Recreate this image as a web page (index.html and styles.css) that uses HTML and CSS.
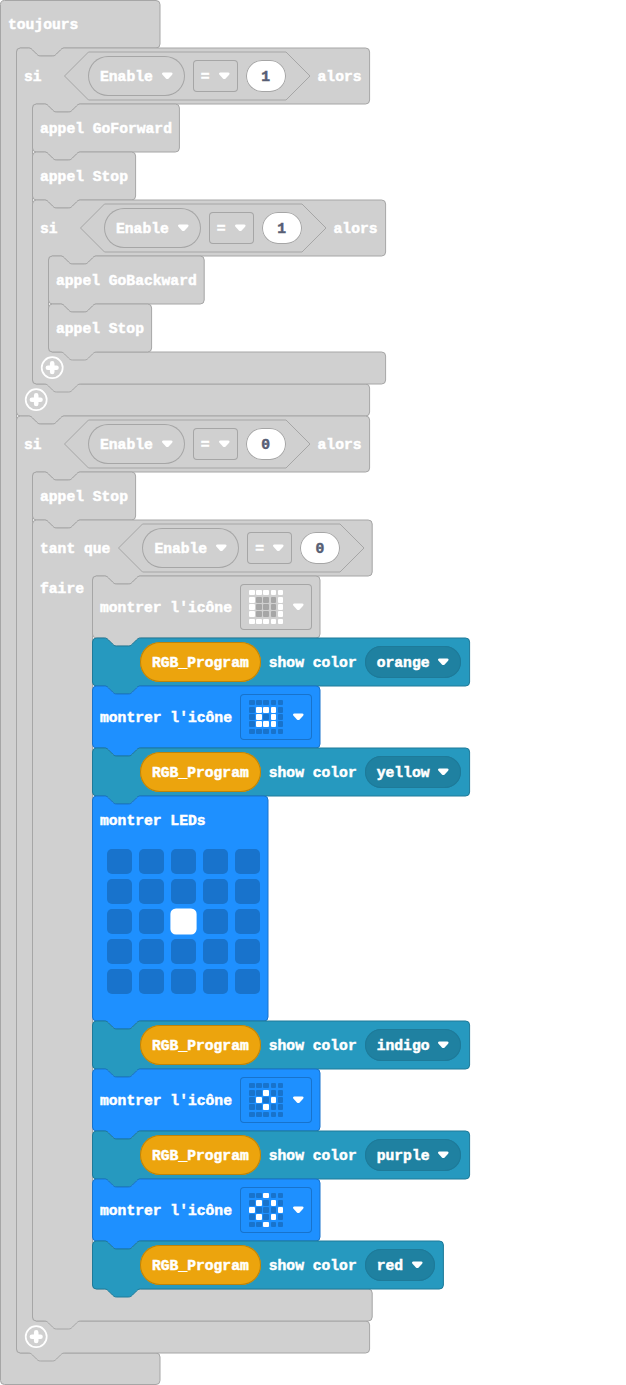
FILE: index.html
```html
<!DOCTYPE html>
<html lang="fr">
<head>
<meta charset="utf-8">
<title>toujours</title>
<link rel="stylesheet" href="styles.css">
</head>
<body>
<svg class="defs" width="0" height="0">
  <symbol id="arrow" viewBox="0 0 12 8"><path d="M2.4 .5H10.2C11.7 .5 11.9 1.9 11.1 2.8L7.7 6.4q-1.4 1.3-2.8 0L1.5 2.8C.7 1.9 .9 .5 2.4 .5z"/></symbol>
  <symbol id="plus" viewBox="0 0 24 24"><circle cx="12.2" cy="11.7" r="10.5" fill="none" stroke="#fff" stroke-width="1.7"/><path d="M12.2 7.4v8.6M7.9 11.7h8.6" fill="none" stroke="#fff" stroke-width="4.6" stroke-linecap="round"/></symbol>
  <symbol id="hexagon" viewBox="0 0 246 48" overflow="visible"><path d="M24.5 0H222L246 24L222 48H24.5L.5 24Z"/></symbol>
  <symbol id="call" overflow="visible"><path d="M.5 4a4 4 0 0 1 4-4h8c2 0 3 1 4 2l4 4c1 1 2 2 4 2h12c2 0 3-1 4-2l4-4c1-1 2-2 4-2H99.6a4 4 0 0 1 4 4V44a4 4 0 0 1-4 4H48.5c-2 0-3 1-4 2l-4 4c-1 1-2 2-4 2h-12c-2 0-3-1-4-2l-4-4c-1-1-2-2-4-2h-8a4 4 0 0 1-4-4z"/></symbol>
  <symbol id="icon-block" overflow="visible"><path d="M.5 4a4 4 0 0 1 4-4h8c2 0 3 1 4 2l4 4c1 1 2 2 4 2h12c2 0 3-1 4-2l4-4c1-1 2-2 4-2H224a4 4 0 0 1 4 4V58a4 4 0 0 1-4 4H48.5c-2 0-3 1-4 2l-4 4c-1 1-2 2-4 2h-12c-2 0-3-1-4-2l-4-4c-1-1-2-2-4-2h-8a4 4 0 0 1-4-4z"/></symbol>
  <symbol id="color-block" overflow="visible"><path d="M.5 4a4 4 0 0 1 4-4h8c2 0 3 1 4 2l4 4c1 1 2 2 4 2h12c2 0 3-1 4-2l4-4c1-1 2-2 4-2H373.6a4 4 0 0 1 4 4V44a4 4 0 0 1-4 4H48.5c-2 0-3 1-4 2l-4 4c-1 1-2 2-4 2h-12c-2 0-3-1-4-2l-4-4c-1-1-2-2-4-2h-8a4 4 0 0 1-4-4z"/></symbol>
</svg>

<main class="block gray forever">
  <svg class="shape"><path d="M.5 4.5a4 4 0 0 1 4-4H156a4 4 0 0 1 4 4V44a4 4 0 0 1-4 4H64.5c-2 0-3 1-4 2l-4 4c-1 1-2 2-4 2h-12c-2 0-3-1-4-2l-4-4c-1-1-2-2-4-2h-8a4 4 0 0 0-4 4V1349a4 4 0 0 0 4 4H156a4 4 0 0 1 4 4V1380.5a4 4 0 0 1-4 4H4.5a4 4 0 0 1-4-4z"/></svg>
  <div class="content">
    <div class="row head"><span>toujours</span></div>
    <div class="stack">

      <section class="block gray">
        <svg class="shape"><path d="M.5 4a4 4 0 0 1 4-4h8c2 0 3 1 4 2l4 4c1 1 2 2 4 2h12c2 0 3-1 4-2l4-4c1-1 2-2 4-2H349.6a4 4 0 0 1 4 4V52a4 4 0 0 1-4 4H64.5c-2 0-3 1-4 2l-4 4c-1 1-2 2-4 2h-12c-2 0-3-1-4-2l-4-4c-1-1-2-2-4-2h-8a4 4 0 0 0-4 4V332a4 4 0 0 0 4 4H349.6a4 4 0 0 1 4 4V364a4 4 0 0 1-4 4H48.5c-2 0-3 1-4 2l-4 4c-1 1-2 2-4 2h-12c-2 0-3-1-4-2l-4-4c-1-1-2-2-4-2h-8a4 4 0 0 1-4-4z"/></svg>
        <div class="content">
          <div class="row cond">
            <span class="if">si</span>
            <div class="test"><svg class="shape"><use href="#hexagon" width="246" height="48"/></svg><div class="operands"><span class="pill var">Enable<svg class="arrow"><use href="#arrow"/></svg></span><span class="op">=<svg class="arrow"><use href="#arrow"/></svg></span><span class="num">1</span></div></div>
            <span>alors</span>
          </div>
          <div class="stack">
            <div class="block gray"><svg class="shape"><path d="M.5 4a4 4 0 0 1 4-4h8c2 0 3 1 4 2l4 4c1 1 2 2 4 2h12c2 0 3-1 4-2l4-4c1-1 2-2 4-2H143.4a4 4 0 0 1 4 4V44a4 4 0 0 1-4 4H48.5c-2 0-3 1-4 2l-4 4c-1 1-2 2-4 2h-12c-2 0-3-1-4-2l-4-4c-1-1-2-2-4-2h-8a4 4 0 0 1-4-4z"/></svg><div class="row">appel GoForward</div></div>
            <div class="block gray"><svg class="shape"><use href="#call"/></svg><div class="row">appel Stop</div></div>

            <section class="block gray">
              <svg class="shape"><path d="M.5 4a4 4 0 0 1 4-4h8c2 0 3 1 4 2l4 4c1 1 2 2 4 2h12c2 0 3-1 4-2l4-4c1-1 2-2 4-2H349.6a4 4 0 0 1 4 4V52a4 4 0 0 1-4 4H64.5c-2 0-3 1-4 2l-4 4c-1 1-2 2-4 2h-12c-2 0-3-1-4-2l-4-4c-1-1-2-2-4-2h-8a4 4 0 0 0-4 4V148a4 4 0 0 0 4 4H349.6a4 4 0 0 1 4 4V180a4 4 0 0 1-4 4H48.5c-2 0-3 1-4 2l-4 4c-1 1-2 2-4 2h-12c-2 0-3-1-4-2l-4-4c-1-1-2-2-4-2h-8a4 4 0 0 1-4-4z"/></svg>
              <div class="content">
                <div class="row cond">
                  <span class="if">si</span>
                  <div class="test"><svg class="shape"><use href="#hexagon" width="246" height="48"/></svg><div class="operands"><span class="pill var">Enable<svg class="arrow"><use href="#arrow"/></svg></span><span class="op">=<svg class="arrow"><use href="#arrow"/></svg></span><span class="num">1</span></div></div>
                  <span>alors</span>
                </div>
                <div class="stack">
                  <div class="block gray"><svg class="shape"><path d="M.5 4a4 4 0 0 1 4-4h8c2 0 3 1 4 2l4 4c1 1 2 2 4 2h12c2 0 3-1 4-2l4-4c1-1 2-2 4-2H152.2a4 4 0 0 1 4 4V44a4 4 0 0 1-4 4H48.5c-2 0-3 1-4 2l-4 4c-1 1-2 2-4 2h-12c-2 0-3-1-4-2l-4-4c-1-1-2-2-4-2h-8a4 4 0 0 1-4-4z"/></svg><div class="row">appel GoBackward</div></div>
                  <div class="block gray"><svg class="shape"><use href="#call"/></svg><div class="row">appel Stop</div></div>
                </div>
                <div class="foot"><svg class="plus"><use href="#plus"/></svg></div>
              </div>
            </section>
          </div>
          <div class="foot"><svg class="plus"><use href="#plus"/></svg></div>
        </div>
      </section>

      <section class="block gray">
        <svg class="shape"><path d="M.5 4a4 4 0 0 1 4-4h8c2 0 3 1 4 2l4 4c1 1 2 2 4 2h12c2 0 3-1 4-2l4-4c1-1 2-2 4-2H349.6a4 4 0 0 1 4 4V52a4 4 0 0 1-4 4H64.5c-2 0-3 1-4 2l-4 4c-1 1-2 2-4 2h-12c-2 0-3-1-4-2l-4-4c-1-1-2-2-4-2h-8a4 4 0 0 0-4 4V901a4 4 0 0 0 4 4H349.6a4 4 0 0 1 4 4V933a4 4 0 0 1-4 4H48.5c-2 0-3 1-4 2l-4 4c-1 1-2 2-4 2h-12c-2 0-3-1-4-2l-4-4c-1-1-2-2-4-2h-8a4 4 0 0 1-4-4z"/></svg>
        <div class="content">
          <div class="row cond">
            <span class="if">si</span>
            <div class="test"><svg class="shape"><use href="#hexagon" width="246" height="48"/></svg><div class="operands"><span class="pill var">Enable<svg class="arrow"><use href="#arrow"/></svg></span><span class="op">=<svg class="arrow"><use href="#arrow"/></svg></span><span class="num">0</span></div></div>
            <span>alors</span>
          </div>
          <div class="stack">
            <div class="block gray"><svg class="shape"><use href="#call"/></svg><div class="row">appel Stop</div></div>

            <section class="block gray">
              <svg class="shape"><path d="M.5 4a4 4 0 0 1 4-4h8c2 0 3 1 4 2l4 4c1 1 2 2 4 2h12c2 0 3-1 4-2l4-4c1-1 2-2 4-2H336.2a4 4 0 0 1 4 4V52a4 4 0 0 1-4 4H108.5c-2 0-3 1-4 2l-4 4c-1 1-2 2-4 2h-12c-2 0-3-1-4-2l-4-4c-1-1-2-2-4-2h-8a4 4 0 0 0-4 4V765a4 4 0 0 0 4 4H336.2a4 4 0 0 1 4 4V797a4 4 0 0 1-4 4H48.5c-2 0-3 1-4 2l-4 4c-1 1-2 2-4 2h-12c-2 0-3-1-4-2l-4-4c-1-1-2-2-4-2h-8a4 4 0 0 1-4-4z"/></svg>
              <div class="content">
                <div class="row cond">
                  <span>tant que</span>
                  <div class="test"><svg class="shape"><use href="#hexagon" width="246" height="48"/></svg><div class="operands"><span class="pill var">Enable<svg class="arrow"><use href="#arrow"/></svg></span><span class="op">=<svg class="arrow"><use href="#arrow"/></svg></span><span class="num">0</span></div></div>
                </div>
                <div class="loop">
                  <span class="do">faire</span>
                  <div class="body">

                    <div class="block gray"><svg class="shape"><use href="#icon-block"/></svg><div class="row tall">montrer l'icône
                      <span class="icon"><span class="mini"><i class="on"></i><i class="on"></i><i class="on"></i><i class="on"></i><i class="on"></i><i class="on"></i><i></i><i></i><i></i><i class="on"></i><i class="on"></i><i></i><i></i><i></i><i class="on"></i><i class="on"></i><i></i><i></i><i></i><i class="on"></i><i class="on"></i><i class="on"></i><i class="on"></i><i class="on"></i><i class="on"></i></span><svg class="arrow"><use href="#arrow"/></svg></span></div></div>

                    <div class="block teal"><svg class="shape"><use href="#color-block"/></svg><div class="row color"><span class="pill name">RGB_Program</span>show color<span class="pill choice">orange<svg class="arrow"><use href="#arrow"/></svg></span></div></div>

                    <div class="block blue"><svg class="shape"><use href="#icon-block"/></svg><div class="row tall">montrer l'icône
                      <span class="icon"><span class="mini"><i></i><i></i><i></i><i></i><i></i><i></i><i class="on"></i><i class="on"></i><i class="on"></i><i></i><i></i><i class="on"></i><i></i><i class="on"></i><i></i><i></i><i class="on"></i><i class="on"></i><i class="on"></i><i></i><i></i><i></i><i></i><i></i><i></i></span><svg class="arrow"><use href="#arrow"/></svg></span></div></div>

                    <div class="block teal"><svg class="shape"><use href="#color-block"/></svg><div class="row color"><span class="pill name">RGB_Program</span>show color<span class="pill choice">yellow<svg class="arrow"><use href="#arrow"/></svg></span></div></div>

                    <div class="block blue">
                      <svg class="shape"><path d="M.5 4a4 4 0 0 1 4-4h8c2 0 3 1 4 2l4 4c1 1 2 2 4 2h12c2 0 3-1 4-2l4-4c1-1 2-2 4-2H172a4 4 0 0 1 4 4V221a4 4 0 0 1-4 4H48.5c-2 0-3 1-4 2l-4 4c-1 1-2 2-4 2h-12c-2 0-3-1-4-2l-4-4c-1-1-2-2-4-2h-8a4 4 0 0 1-4-4z"/></svg>
                      <div class="content leds">
                        <div class="row">montrer LEDs</div>
                        <div class="matrix"><i></i><i></i><i></i><i></i><i></i><i></i><i></i><i></i><i></i><i></i><i></i><i></i><i class="on"></i><i></i><i></i><i></i><i></i><i></i><i></i><i></i><i></i><i></i><i></i><i></i><i></i></div>
                      </div>
                    </div>

                    <div class="block teal"><svg class="shape"><use href="#color-block"/></svg><div class="row color"><span class="pill name">RGB_Program</span>show color<span class="pill choice">indigo<svg class="arrow"><use href="#arrow"/></svg></span></div></div>

                    <div class="block blue"><svg class="shape"><use href="#icon-block"/></svg><div class="row tall">montrer l'icône
                      <span class="icon"><span class="mini"><i></i><i></i><i></i><i></i><i></i><i></i><i></i><i class="on"></i><i></i><i></i><i></i><i class="on"></i><i></i><i class="on"></i><i></i><i></i><i></i><i class="on"></i><i></i><i></i><i></i><i></i><i></i><i></i><i></i></span><svg class="arrow"><use href="#arrow"/></svg></span></div></div>

                    <div class="block teal"><svg class="shape"><use href="#color-block"/></svg><div class="row color"><span class="pill name">RGB_Program</span>show color<span class="pill choice">purple<svg class="arrow"><use href="#arrow"/></svg></span></div></div>

                    <div class="block blue"><svg class="shape"><use href="#icon-block"/></svg><div class="row tall">montrer l'icône
                      <span class="icon"><span class="mini"><i></i><i></i><i class="on"></i><i></i><i></i><i></i><i class="on"></i><i></i><i class="on"></i><i></i><i class="on"></i><i></i><i></i><i></i><i class="on"></i><i></i><i class="on"></i><i></i><i class="on"></i><i></i><i></i><i></i><i class="on"></i><i></i><i></i></span><svg class="arrow"><use href="#arrow"/></svg></span></div></div>

                    <div class="block teal"><svg class="shape"><path d="M.5 4a4 4 0 0 1 4-4h8c2 0 3 1 4 2l4 4c1 1 2 2 4 2h12c2 0 3-1 4-2l4-4c1-1 2-2 4-2H347.4a4 4 0 0 1 4 4V44a4 4 0 0 1-4 4H48.5c-2 0-3 1-4 2l-4 4c-1 1-2 2-4 2h-12c-2 0-3-1-4-2l-4-4c-1-1-2-2-4-2h-8a4 4 0 0 1-4-4z"/></svg><div class="row color"><span class="pill name">RGB_Program</span>show color<span class="pill choice">red<svg class="arrow"><use href="#arrow"/></svg></span></div></div>

                  </div>
                </div>
                <div class="foot"></div>
              </div>
            </section>
          </div>
          <div class="foot"><svg class="plus"><use href="#plus"/></svg></div>
        </div>
      </section>

    </div>
    <div class="foot"></div>
  </div>
</main>
</body>
</html>
```

FILE: styles.css
```css
* { box-sizing: border-box; }
html, body { margin: 0; background: #fff; }
body {
  height: 1385px;
  overflow: hidden;
  font: bold 14.667px/16px "Liberation Mono", monospace;
  color: #fff;
  -webkit-text-stroke: 0.5px currentColor;
}
.defs { display: block; }

/* A block stacks its outline and its content in one grid cell. */
.block, .test { display: grid; width: max-content; }
.block > *, .test > * { grid-area: 1 / 1; }
.shape {
  width: 1px;
  height: 1px;
  overflow: visible;
  fill: var(--fill);
  stroke: var(--edge);
  stroke-width: 1;
}
.gray { --fill: #d0d0d0; --edge: #a6a6a6; --led: #a6a6a6; }
.teal { --fill: #2699bf; --edge: #1e7a99; }
.blue { --fill: #1e90ff; --edge: #1873cc; --led: #1873cc; }

/* Labels sit 1px below the centre line; fields stay centred on it. */
.row {
  display: flex;
  align-items: center;
  gap: 8px;
  height: 48px;
  padding: 2px 8px 0;
  white-space: nowrap;
}
.row > .test, .row > .pill, .row > .icon { margin-top: -2px; }
.cond { height: 56px; }
.tall { height: 62px; }
.color { padding-left: 48px; }
.if { width: 32px; }
.stack { padding-left: 16px; }
.foot { height: 32px; padding: 4px 0 0 8px; }
.plus { display: block; width: 24px; height: 24px; }

.operands { display: flex; align-items: center; gap: 8px; height: 48px; padding: 0 24px; }
.pill {
  display: flex;
  align-items: center;
  gap: 8px;
  height: 40px;
  padding: 2px 12px 0;
  border-radius: 20px;
  box-shadow: inset 0 0 0 1px var(--edge);
}
.name { background: #eca40d; --edge: #bc830a; }
.choice { height: 32px; background: #1f81a1; --edge: #1e7a99; }
.op {
  display: flex;
  align-items: center;
  gap: 8px;
  height: 32px;
  padding: 2px 8px 0;
  border-radius: 4px;
  box-shadow: inset 0 0 0 1px var(--edge);
}
.num {
  width: 40px;
  height: 32px;
  line-height: 34px;
  border-radius: 16px;
  text-align: center;
  color: #575e75;
  background: #fff;
  box-shadow: inset 0 0 0 1px var(--edge);
}
.arrow { width: 12px; height: 8px; fill: #fff; flex: none; }
.pill .arrow, .op .arrow { margin-top: -2px; }

.loop { display: flex; }
.do { width: 60px; padding: 5px 0 0 8px; }

.icon {
  display: flex;
  align-items: center;
  gap: 9px;
  width: 72.5px;
  height: 46px;
  padding: 0 9px;
  border-radius: 4px;
  box-shadow: inset 0 0 0 1px var(--edge);
}
.mini { display: grid; grid-template-columns: repeat(5, 5.6px); grid-auto-rows: 5.6px; gap: 1.6px; }
.mini i { border-radius: 1px; background: var(--led); }
.leds { height: 225px; width: 176px; }
.matrix {
  display: grid;
  grid-template-columns: repeat(5, 25px);
  grid-auto-rows: 25px;
  gap: 5px 7px;
  padding: 5px 0 0 15px;
}
.matrix i { border-radius: 5px; background: var(--led); }
.mini .on, .matrix .on { background: #fff; }
.matrix .on { box-shadow: 0 0 0 0.6px #fff; }
```
